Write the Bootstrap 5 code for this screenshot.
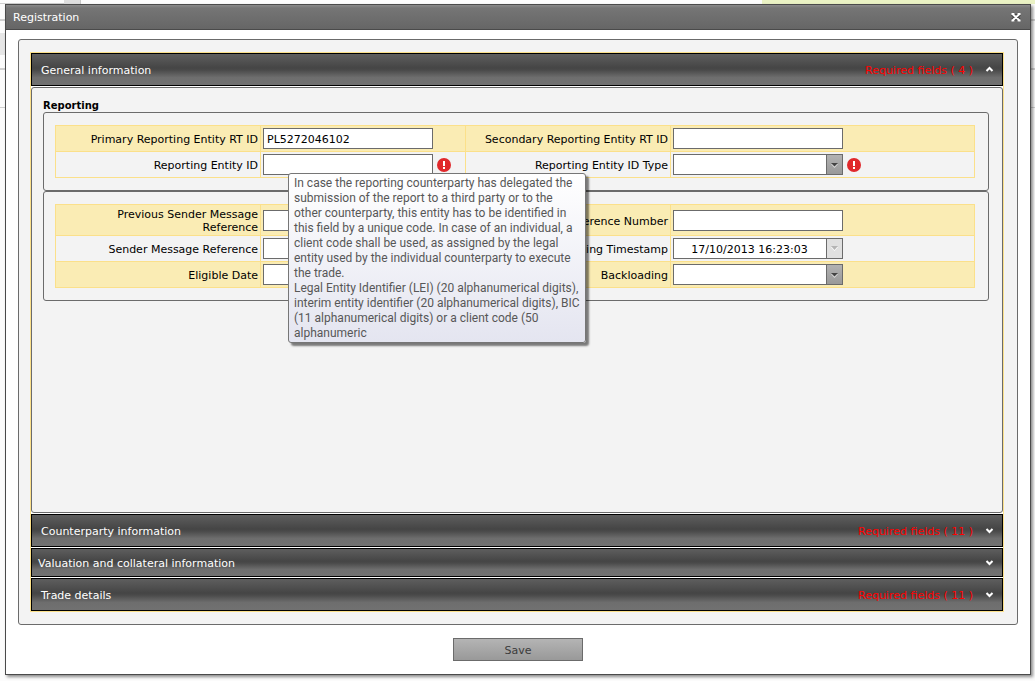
<!DOCTYPE html>
<html lang="en">
<head>
<meta charset="utf-8">
<meta name="viewport" content="width=device-width, initial-scale=1">
<title>Registration</title>
<link href="https://cdn.jsdelivr.net/npm/bootstrap@5.3.0/dist/css/bootstrap.min.css" rel="stylesheet">
<style>
  body { font: 11px/13px "DejaVu Sans", Verdana, sans-serif; color: #000; background: #fcfcfc; }
  /* page behind the dialog */
  .backdrop { padding: 4px 4px 6px 5px;
    background:
      linear-gradient(#d0d0d0, #d0d0d0) 0 3px / 64px 1px no-repeat,
      linear-gradient(#dedede, #dedede) 64px 0 / 16px 4px no-repeat,
      linear-gradient(#c8c8c8, #c8c8c8) 80px 0 / 1px 4px no-repeat,
      linear-gradient(#eaf2c4, #eaf2c4) right 0 top 0 / calc(100% - 762px) 4px no-repeat,
      linear-gradient(#d0d0d0, #d0d0d0) 0 19px / 100% 2px no-repeat,
      linear-gradient(#e6e6e6, #e6e6e6) 0 33px / 5px 22px no-repeat,
      linear-gradient(#d0d0d0, #d0d0d0) 0 68px / 100% 2px no-repeat,
      linear-gradient(#d0d0d0, #d0d0d0) 0 107px / 100% 1px no-repeat,
      #fcfcfc; }
  .dialog { border: 1px solid #4a4a4a; background: #fff; box-shadow: 2px 2px 3px rgba(0,0,0,.45); }
  .title-strip { height: 25px; padding: 0 8px 0 7px; color: #fff; border-bottom: 1px solid #4a4a4a;
    background: linear-gradient(#8a8a8a, #757575 3px, #666); }
  .title-strip h1 { font-size: 11px; line-height: 13px; margin: 0; font-weight: 400; }
  .bare { border: 0; padding: 0; background: none; display: flex; }
  .dialog-body { padding: 9px 12px 13px; gap: 13px; }
  .panel { border: 1px solid #6b6b6b; border-radius: 3px; background: #f3f3f3; padding: 12px 13px 12px 11px; }
  .sections { border: 1px solid #fbe08a; background: #fff; gap: 1px; }
  .section-head { min-height: 33px; padding: 1px 8px 0 9px; border: 1px solid #000; color: #fff; text-align: left;
    background: linear-gradient(#5e5e5e, #454545 45%, #4a4a4a 52%, #6e6e6e 76%, #717171); }
  .section-head.slim { min-height: 29px; padding-left: 6px; }
  .required { color: #ff0000; margin-right: 12px; }
  .section-body { border: 1px solid #6b6b6b; border-radius: 3px; background: #f3f3f3; padding: 12px 13px 12px 11px; }
  .section-body h2 { font-size: 10px; line-height: 12px; font-weight: 700; margin: 0; }
  .group { border: 1px solid #6b6b6b; border-radius: 3px; padding: 12px 13px 12px 11px; }
  .form-lines { border: 1px solid #fbe08a; border-bottom: 0; }
  .line { display: grid; grid-template-columns: 205px 205px 205px 1fr; border-bottom: 1px solid #fbe08a; }
  .line.shade { background: #faecb4; }
  .line > * { border-right: 1px solid #fbe08a; padding: 2px; min-height: 25px; display: flex; align-items: center; }
  .line > :last-child { border-right: 0; }
  .line > label { justify-content: flex-end; text-align: right; padding: 3px 2px 1px; }
  .field { position: relative; gap: 4px; }
  .box { width: 170px; height: 21px; border: 1px solid #6b6b6b; border-radius: 0; background: #fff; padding: 1px 4px 0 3px;
    font: inherit; color: #000; }
  select.box { appearance: none; padding-right: 18px;
    background: url("data:image/svg+xml,%3Csvg xmlns='http://www.w3.org/2000/svg' width='16' height='19'%3E%3ClinearGradient id='g' x2='0' y2='1'%3E%3Cstop stop-color='%23b2b2b2'/%3E%3Cstop offset='1' stop-color='%23999'/%3E%3C/linearGradient%3E%3Cpath fill='url(%23g)' d='M0 0h16v19H0z'/%3E%3Cpath fill='%236b6b6b' d='M0 0h1v19H0z'/%3E%3Cpath fill='%23ddd' d='M5 9h7l-3.5 4z'/%3E%3Cpath fill='%23444' d='M5 8h7l-3.5 3.5z'/%3E%3C/svg%3E") right / 16px 19px no-repeat #fff; }
  .stamp { width: 170px; }
  .stamp .box { width: 153px; text-align: center; border-right: 0; }
  .stamp button { width: 17px; height: 21px; border: 1px solid #6b6b6b; padding: 0; background: #e0e0e0; display: flex; align-items: center; justify-content: center; }
  .hint { position: absolute; left: 27px; top: 21px; z-index: 5; white-space: nowrap; color: #575757;
    width: 298px; font: 12px/15px Roboto, "Open Sans", sans-serif; padding: 2px 5px 1px;
    border: 1px solid #767676; border-radius: 3px; background: linear-gradient(#fff, #e4e5f0);
    box-shadow: 3px 3px 2px rgba(0,0,0,.5); }
  .save { width: 130px; height: 23px; border: 1px solid #6b6b6b; color: #3c3c3c; padding: 1px 0 0; background: linear-gradient(#b4b4b4, #999); }
</style>
</head>
<body>
<div class="backdrop min-vh-100 d-flex">
  <main class="dialog flex-grow-1 d-flex flex-column" role="dialog" aria-labelledby="dlg-title">
    <header class="title-strip d-flex align-items-center justify-content-between">
      <h1 id="dlg-title">Registration</h1>
      <button type="button" class="bare" aria-label="Close">
        <svg width="12" height="12" viewBox="0 0 12 12"><path d="M2.500 3l7 6.500M9.500 3l-7 6.500" stroke="#444" stroke-width="4"/><path d="M2.500 3l7 6.500M9.500 3l-7 6.500M1.500 3h3M7.500 3h3M1.500 9.500h3M7.500 9.500h3" stroke="#fff" stroke-width="2"/></svg>
      </button>
    </header>
    <form class="dialog-body flex-grow-1 d-flex flex-column align-items-center">
      <div class="panel flex-grow-1 align-self-stretch d-flex">
        <div class="sections flex-grow-1 d-flex flex-column">
          <button type="button" class="section-head d-flex align-items-center" aria-expanded="true">
            <span class="flex-grow-1">General information</span><span class="required">Required fields ( 4 )</span>
            <svg width="9" height="8" viewBox="0 0 9 8"><path d="M1.500 5l3-3 3 3" fill="none" stroke="#fff" stroke-width="2"/></svg>
          </button>
          <section class="section-body flex-grow-1">
            <h2>Reporting</h2>
            <div class="group">
              <div class="form-lines">
                <div class="line shade">
                  <label for="primary">Primary Reporting Entity RT ID</label>
                  <div class="field"><input id="primary" class="box" type="text" value="PL5272046102"></div>
                  <label for="secondary">Secondary Reporting Entity RT ID</label>
                  <div class="field"><input id="secondary" class="box" type="text"></div>
                </div>
                <div class="line">
                  <label for="entity">Reporting Entity ID</label>
                  <div class="field"><input id="entity" class="box" type="text" aria-describedby="entity-hint">
                    <svg width="14" height="14" viewBox="0 0 14 14"><circle cx="7" cy="7" r="7" fill="#e0282b"/><path d="M6 3h2v5H6zM6 9h2v2H6z" fill="#fff"/></svg>
                    <div class="hint" id="entity-hint" role="tooltip">In case the reporting counterparty has delegated the<br>submission of the report to a third party or to the<br>other counterparty, this entity has to be identified in<br>this field by a unique code. In case of an individual, a<br>client code shall be used, as assigned by the legal<br>entity used by the individual counterparty to execute<br>the trade.<br>Legal Entity Identifier (LEI) (20 alphanumerical digits),<br>interim entity identifier (20 alphanumerical digits), BIC<br>(11 alphanumerical digits) or a client code (50<br>alphanumeric</div>
                  </div>
                  <label for="entity-type">Reporting Entity ID Type</label>
                  <div class="field"><select id="entity-type" class="box"><option></option></select>
                    <svg width="14" height="14" viewBox="0 0 14 14"><circle cx="7" cy="7" r="7" fill="#e0282b"/><path d="M6 3h2v5H6zM6 9h2v2H6z" fill="#fff"/></svg>
                  </div>
                </div>
              </div>
            </div>
            <div class="group">
              <div class="form-lines">
                <div class="line shade">
                  <label for="prev-ref">Previous Sender Message<br>Reference</label>
                  <div class="field"><input id="prev-ref" class="box" type="text"></div>
                  <label for="ref-no">Reference Number</label>
                  <div class="field"><input id="ref-no" class="box" type="text"></div>
                </div>
                <div class="line">
                  <label for="msg-ref">Sender Message Reference</label>
                  <div class="field"><input id="msg-ref" class="box" type="text"></div>
                  <label for="stamp">Reporting Timestamp</label>
                  <div class="field"><div class="stamp d-flex"><input id="stamp" class="box" type="text" value="17/10/2013 16:23:03"><button type="button" aria-label="Pick date" disabled><svg width="7" height="5" viewBox="0 0 7 5"><path d="M0 1h7L3.500 5z" fill="#fff"/><path d="M0 0h7L3.500 4z" fill="#b4b4b4"/></svg></button></div></div>
                </div>
                <div class="line shade">
                  <label for="eligible">Eligible Date</label>
                  <div class="field"><input id="eligible" class="box" type="text"></div>
                  <label for="backloading">Backloading</label>
                  <div class="field"><select id="backloading" class="box"><option></option></select></div>
                </div>
              </div>
            </div>
          </section>
          <button type="button" class="section-head d-flex align-items-center" aria-expanded="false">
            <span class="flex-grow-1">Counterparty information</span><span class="required">Required fields ( 11 )</span>
            <svg width="9" height="8" viewBox="0 0 9 8"><path d="M1.500 2l3 3 3-3" fill="none" stroke="#fff" stroke-width="2"/></svg>
          </button>
          <button type="button" class="section-head slim d-flex align-items-center" aria-expanded="false">
            <span class="flex-grow-1">Valuation and collateral information</span>
            <svg width="9" height="8" viewBox="0 0 9 8"><path d="M1.500 2l3 3 3-3" fill="none" stroke="#fff" stroke-width="2"/></svg>
          </button>
          <button type="button" class="section-head d-flex align-items-center" aria-expanded="false">
            <span class="flex-grow-1">Trade details</span><span class="required">Required fields ( 11 )</span>
            <svg width="9" height="8" viewBox="0 0 9 8"><path d="M1.500 2l3 3 3-3" fill="none" stroke="#fff" stroke-width="2"/></svg>
          </button>
        </div>
      </div>
      <button type="submit" class="save">Save</button>
    </form>
  </main>
</div>
<script src="https://cdn.jsdelivr.net/npm/bootstrap@5.3.0/dist/js/bootstrap.bundle.min.js"></script>
</body>
</html>
